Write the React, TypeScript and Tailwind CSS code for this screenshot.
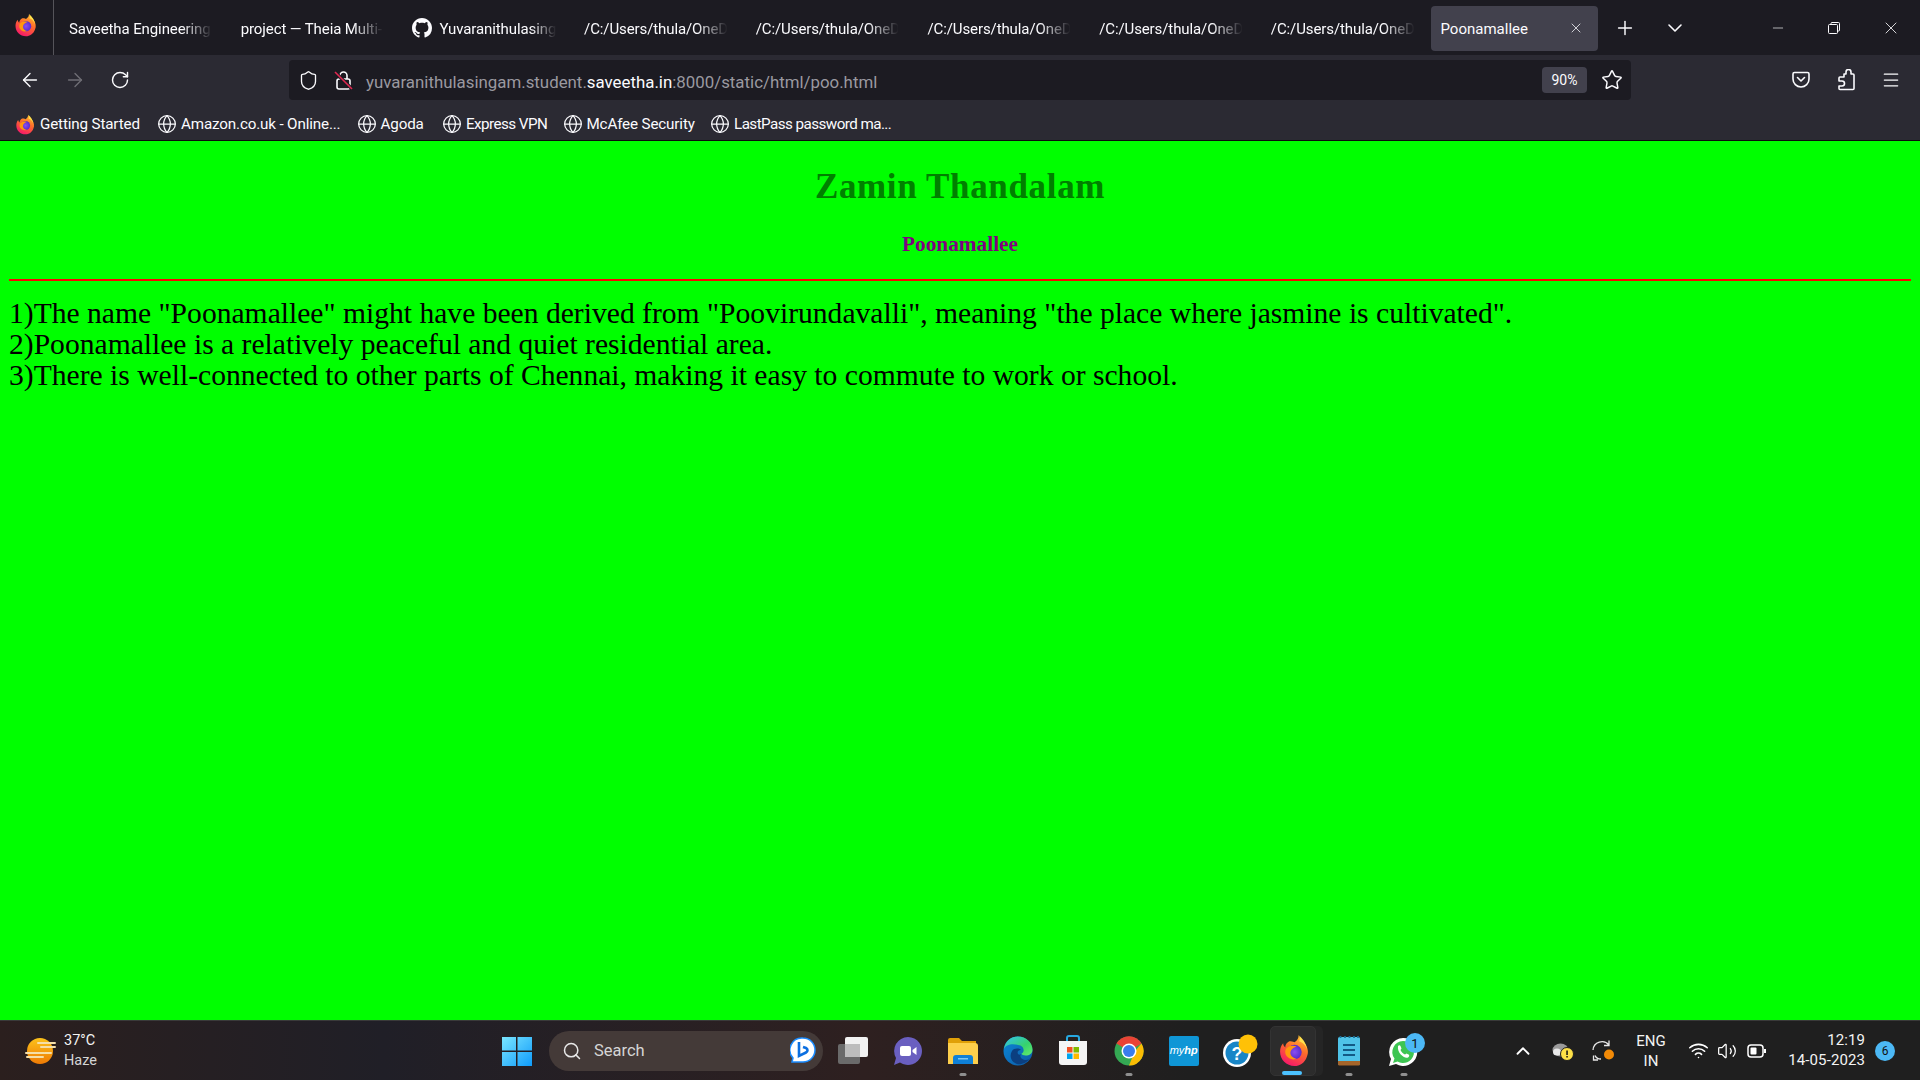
import React from "react";
import { ArrowLeft, ArrowRight, RotateCw, Shield, Star, Menu, Plus, ChevronDown, ChevronUp, X, Minus, Search, Wifi, Volume2, Globe } from "lucide-react";

const UI = "font-['Roboto','Open_Sans',sans-serif]";

function Firefox({ size = 22 }: { size?: number }) {
  return (
    <svg width={size} height={size} viewBox="0 0 32 32">
      <defs>
        <linearGradient id="ffa" x1="0.75" y1="0" x2="0.3" y2="1">
          <stop offset="0" stopColor="#ffc42e" />
          <stop offset="0.45" stopColor="#ff6a2b" />
          <stop offset="1" stopColor="#f5156c" />
        </linearGradient>
        <radialGradient id="ffb" cx="0.5" cy="0.5" r="0.5">
          <stop offset="0" stopColor="#8a4ff0" />
          <stop offset="1" stopColor="#592acb" />
        </radialGradient>
      </defs>
      <path d="M20 1c1 3 4 5 6 8 3 4 4 9 2 13-2 6-7 9-12 9C8 31 2 25 2 17c0-3 1-6 3-8 0 2 1 3 2 4 0-3 2-5 4-6 2 0 3 0 5 1 3-2 4-4 4-7z" fill="url(#ffa)" />
      <path d="M20.500 1.500c3 3 7 7 7.500 13.500-1-4-4-7-7.500-8 1-2 .8-3.500 0-5.500z" fill="#ffe14d" />
      <circle cx="16" cy="17.500" r="7" fill="url(#ffb)" />
      <path d="M8 14c3-3 7-3 10-2-3 1-6 3-6 6.500 0 3 3 5 6 5.500-4 2-11-1-11-6.500 0-1.500.4-2.500 1-3.500z" fill="#ff980e" />
    </svg>
  );
}

function GitHubMark() {
  return (
    <svg width="20" height="20" viewBox="0 0 16 16" fill="#fbfbfe">
      <path d="M8 0C3.58 0 0 3.58 0 8c0 3.54 2.29 6.53 5.47 7.59.4.07.55-.17.55-.38 0-.19-.01-.82-.01-1.49-2.01.37-2.53-.49-2.69-.94-.09-.23-.48-.94-.82-1.13-.28-.15-.68-.52-.01-.53.63-.01 1.08.58 1.23.82.72 1.21 1.87.87 2.33.66.07-.52.28-.87.51-1.07-1.78-.2-3.64-.89-3.64-3.95 0-.87.31-1.59.82-2.15-.08-.2-.36-1.02.08-2.12 0 0 .67-.21 2.2.82.64-.18 1.32-.27 2-.27s1.36.09 2 .27c1.53-1.04 2.2-.82 2.2-.82.44 1.1.16 1.92.08 2.12.51.56.82 1.27.82 2.15 0 3.07-1.87 3.75-3.65 3.95.29.25.54.73.54 1.48 0 1.07-.01 1.93-.01 2.2 0 .21.15.46.55.38A8.01 8.01 0 0 0 16 8c0-4.42-3.58-8-8-8z" />
    </svg>
  );
}

function Tab({ label, icon }: { label: string; icon?: React.ReactNode }) {
  return (
    <div className="w-[171.7px] h-[45px] flex items-center px-3 gap-[7px] shrink-0">
      {icon}
      <span className="whitespace-nowrap overflow-hidden flex-1 text-[15px] leading-[20px] pt-[2px] text-[#fbfbfe] tracking-[-0.1px] [mask-image:linear-gradient(90deg,#000_76%,transparent_97%)]">{label}</span>
    </div>
  );
}

function Bookmark({ label, ff, w, tight }: { label: string; ff?: boolean; w: string; tight?: boolean }) {
  return (
    <div className={"flex items-center gap-[4px] shrink-0 " + w}>
      {ff ? <Firefox size={21} /> : <Globe size={20} strokeWidth={1.5} className="text-[#fbfbfe]" />}
      <span className={"whitespace-nowrap text-[15.2px] text-[#fbfbfe] " + (tight ? "tracking-[-0.55px]" : "tracking-[-0.15px]")}>{label}</span>
    </div>
  );
}

function Slot({ children, dot, active }: { children: React.ReactNode; dot?: boolean; active?: boolean }) {
  return (
    <div className="relative w-[55.2px] h-[60px] flex items-center justify-center shrink-0">
      {active && <div className="absolute left-[10px] right-[-1px] top-[5px] bottom-[5px] rounded-[5px] bg-[#252525]" />}
      {active && <div className="absolute left-[3px] right-[6px] top-[5px] bottom-[5px] rounded-[5px] bg-[#2c2c2c] border border-[#333]" />}
      <div className="relative flex items-center justify-center">{children}</div>
      {dot && <div className="absolute bottom-[5px] left-1/2 -translate-x-1/2 w-[7px] h-[3px] rounded-full bg-[#8f8f8f]" />}
      {active && <div className="absolute bottom-[6px] left-[15px] w-[20px] h-[4px] rounded-full bg-[#4cc2ff]" />}
    </div>
  );
}

export default function App() {
  return (
    <div className={"w-[1920px] h-[1080px] flex flex-col overflow-hidden bg-[#00ff00] " + UI}>
      {/* Tab strip */}
      <div className="h-[55px] bg-[#1c1b22] flex items-center shrink-0">
        <div className="w-[54px] h-[55px] flex items-center justify-center border-r border-[#55545a] pb-[6px] pr-[2px]">
          <Firefox size={24} />
        </div>
        <div className="w-[3px]" />
        <div className="flex items-center">
          <Tab label="Saveetha Engineering College" />
          <Tab label="project — Theia Multi-Language" />
          <Tab label="Yuvaranithulasingam" icon={<GitHubMark />} />
          <Tab label="/C:/Users/thula/OneDrive" />
          <Tab label="/C:/Users/thula/OneDrive" />
          <Tab label="/C:/Users/thula/OneDrive" />
          <Tab label="/C:/Users/thula/OneDrive" />
          <Tab label="/C:/Users/thula/OneDrive" />
        </div>
        <div className="w-[167px] h-[45px] mb-[-1px] rounded-[4px] bg-[#42414d] flex items-center justify-between pl-[10px] pr-[14px] shrink-0 text-[15px] text-[#fbfbfe]">
          <span className="pt-[2px]">Poonamallee</span>
          <X size={16} strokeWidth={1.5} className="text-[#d0d0d6]" />
        </div>
        <div className="w-[54px] flex justify-center"><Plus size={22} strokeWidth={1.6} className="text-[#fbfbfe]" /></div>
        <div className="w-[46px] flex justify-center"><ChevronDown size={24} strokeWidth={1.6} className="text-[#fbfbfe]" /></div>
        <div className="flex-1" />
        <div className="w-[56px] flex justify-center"><Minus size={16} strokeWidth={1} className="text-[#fbfbfe]" /></div>
        <div className="w-[56px] flex justify-center">
          <svg width="12" height="12" viewBox="0 0 12 12" fill="none" stroke="#fbfbfe" strokeWidth="1"><rect x="0.5" y="2.5" width="9" height="9" rx="1" /><path d="M3 2.5V1.5a1 1 0 0 1 1-1h6.5a1 1 0 0 1 1 1V8a1 1 0 0 1-1 1h-1" /></svg>
        </div>
        <div className="w-[58px] flex justify-center"><X size={20} strokeWidth={1} className="text-[#fbfbfe]" /></div>
      </div>

      {/* Nav bar */}
      <div className="h-[50px] bg-[#2b2a33] flex items-start pt-[5px] shrink-0">
        <div className="w-[45px] h-[40px] flex items-center justify-center ml-[7px]"><ArrowLeft size={22} strokeWidth={1.5} className="text-[#fbfbfe]" /></div>
        <div className="w-[45px] h-[40px] flex items-center justify-center"><ArrowRight size={22} strokeWidth={1.5} className="text-[#6f6e75]" /></div>
        <div className="w-[45px] h-[40px] flex items-center justify-center"><RotateCw size={20} strokeWidth={1.7} className="text-[#fbfbfe]" /></div>
        <div className="w-[1342px] h-[40px] ml-[147px] rounded-[4px] bg-[#1c1b22] flex items-center pl-[9px] shrink-0">
          <Shield size={21} strokeWidth={1.5} className="text-[#fbfbfe] shrink-0" />
          <div className="w-[20px] h-[22px] ml-[15px] shrink-0">
            <svg width="20" height="22" viewBox="0 0 20 22" fill="none">
              <rect x="3" y="10" width="13" height="10" rx="2" stroke="#fbfbfe" strokeWidth="1.6" />
              <path d="M6 10V6.5a3.5 3.5 0 0 1 7 0V10" stroke="#fbfbfe" strokeWidth="1.6" />
              <path d="M1 3l17 17" stroke="#1c1b22" strokeWidth="3.4" />
              <path d="M1 3l17 17" stroke="#e22850" strokeWidth="1.6" />
            </svg>
          </div>
          <span className="ml-[12px] pt-[5px] text-[16.85px] text-[#9a99a0] whitespace-nowrap">
            yuvaranithulasingam.student.<span className="text-[#fbfbfe]">saveetha.in</span>:8000/static/html/poo.html
          </span>
          <div className="flex-1" />
          <div className="w-[45px] h-[26px] rounded-[4px] bg-[#42414d] flex items-center justify-center text-[14px] text-[#fbfbfe]">90%</div>
          <div className="w-[38px] ml-[6px] flex justify-center"><Star size={22} strokeWidth={1.6} className="text-[#fbfbfe]" /></div>
        </div>
        <div className="flex-1" />
        <div className="w-[45px] h-[40px] flex items-center justify-center">
          <svg width="20" height="20" viewBox="0 0 20 20" fill="none" stroke="#fbfbfe" strokeWidth="1.6" strokeLinecap="round" strokeLinejoin="round"><path d="M3.5 2.5h13a1.5 1.5 0 0 1 1.5 1.5v5a8 8 0 0 1-16 0V4a1.5 1.5 0 0 1 1.5-1.5z" /><path d="M6.5 7.5L10 11l3.5-3.5" /></svg>
        </div>
        <div className="w-[45px] h-[40px] flex items-center justify-center">
          <svg width="20" height="22" viewBox="0 0 20 22" fill="none" stroke="#fbfbfe" strokeWidth="1.6" strokeLinejoin="round"><path d="M8 5h2V3a2.500 2.500 0 0 1 5 0v2h2a1 1 0 0 1 1 1v13.500a1 1 0 0 1-1 1H4a1 1 0 0 1-1-1V17h3a2.500 2.500 0 0 0 0-5H3V9a1 1 0 0 1 1-1h4z" /></svg>
        </div>
        <div className="w-[45px] h-[40px] flex items-center justify-center mr-[7px]"><Menu size={20} strokeWidth={1.5} className="text-[#fbfbfe]" /></div>
      </div>

      {/* Bookmarks */}
      <div className="h-[36px] bg-[#2b2a33] border-b border-[#0c0c0d] flex items-center pl-[15px] pt-[4px] shrink-0">
        <Bookmark ff label="Getting Started" w="w-[142px]" />
        <Bookmark label="Amazon.co.uk - Online..." w="w-[199.5px]" />
        <Bookmark label="Agoda" w="w-[85.5px]" />
        <Bookmark tight label="Express VPN" w="w-[120.5px]" />
        <Bookmark label="McAfee Security" w="w-[147.5px]" />
        <Bookmark tight label="LastPass password ma..." w="w-[190px]" />
      </div>

      {/* Page */}
      <main className="flex-1 bg-[#00ff00] px-[9px] font-['Liberation_Serif',serif] min-h-0">
        <h1 className="text-center font-bold text-[35px] leading-[38px] text-[#008000] tracking-[0.65px] pt-[27px] box-content">Zamin Thandalam</h1>
        <h2 className="text-center font-bold text-[21.3px] leading-[24px] text-[#800080] mt-[26px]">Poonamallee</h2>
        <hr className="border-0 h-[2px] bg-[#ff0000] mt-[23px]" />
        <div className="text-[29.6px] leading-[31px] text-black mt-[17px]">
          <p>1)The name "Poonamallee" might have been derived from "Poovirundavalli", meaning "the place where jasmine is cultivated".</p>
          <p>2)Poonamallee is a relatively peaceful and quiet residential area.</p>
          <p>3)There is well-connected to other parts of Chennai, making it easy to commute to work or school.</p>
        </div>
      </main>

      {/* Taskbar */}
      <footer className="h-[60px] border-t border-[#3a3a3a] bg-[linear-gradient(90deg,#2b1f1e_0%,#201f27_20%,#2e2020_45%,#1f1f1f_62%,#1f1f1f_100%)] flex items-center shrink-0 text-[#f3f3f3]">
        <div className="w-[485px] flex items-center pl-[24px] shrink-0">
          <svg width="32" height="30" viewBox="0 0 32 30">
            <defs><linearGradient id="sun" x1="0" y1="0" x2="0" y2="1"><stop offset="0" stopColor="#fcc21b" /><stop offset="1" stopColor="#ee7a05" /></linearGradient></defs>
            <circle cx="16" cy="15" r="13" fill="url(#sun)" />
            <path d="M14 7h17M17 11h14M2 17h18M3 21h16M21 17h6" stroke="#f5dfa8" strokeWidth="2" strokeLinecap="round" />
          </svg>
          <div className="ml-[8px] flex flex-col text-[14.5px] leading-[20px]">
            <span>37°C</span>
            <span className="text-[#d5d5d5]">Haze</span>
          </div>
        </div>
        <div className="w-[64px] flex justify-center shrink-0">
          <svg width="30" height="30" viewBox="0 0 30 30">
            <defs><linearGradient id="win" x1="0" y1="0" x2="1" y2="1"><stop offset="0" stopColor="#7ae5ff" /><stop offset="1" stopColor="#0f9bfa" /></linearGradient></defs>
            <path d="M0 1h14v13.5H0zM15.5 1H30v13.5H15.5zM0 16h14v14H0zM15.5 16H30v14H15.5z" fill="url(#win)" />
          </svg>
        </div>
        <div className="w-[274px] h-[40px] rounded-full bg-[#443a38] flex items-center pl-[13px] pr-[7px] shrink-0">
          <Search size={20} strokeWidth={1.8} className="text-[#e8e8e8]" />
          <span className="ml-[12px] pt-[2px] text-[16.5px] text-[#d5d5d5]">Search</span>
          <div className="flex-1" />
          <svg width="26" height="28" viewBox="0 0 26 28">
            <path d="M13 1a12 12 0 0 1 0 24H2l1-4A12 12 0 0 1 13 1z" fill="#fff" stroke="#1a8cff" strokeWidth="1.5" />
            <path d="M9 5v14l7-3.5c2-1 2-3.500 0-4.500l-3-1" fill="none" stroke="#0c6fe0" strokeWidth="2.6" />
          </svg>
        </div>
        <div className="w-[2px] shrink-0" />

        <Slot>
          <svg width="32" height="30" viewBox="0 0 32 30"><rect x="1" y="8" width="22" height="20" rx="2" fill="#6a6a6a" /><rect x="8" y="1" width="23" height="20" rx="2" fill="#f2f2f2" /><path d="M8 8h15v13H8z" fill="#bdbdbd" /></svg>
        </Slot>
        <Slot>
          <svg width="30" height="30" viewBox="0 0 30 30"><path d="M15 1a14 14 0 1 1-8 25.500L1 29l2-7A14 14 0 0 1 15 1z" fill="#6a5fc0" /><rect x="7" y="10" width="11" height="10" rx="2" fill="#fff" /><path d="M19.500 14l4-3v8l-4-3z" fill="#fff" /></svg>
        </Slot>
        <Slot dot>
          <svg width="32" height="28" viewBox="0 0 32 28"><path d="M1 3a2 2 0 0 1 2-2h9l3 3h14v4H1z" fill="#e0a008" /><path d="M1 6h27a3 3 0 0 1 3 3v18H1z" fill="#fdcf4c" /><path d="M6 21a3 3 0 0 1 3-3h14a3 3 0 0 1 3 3v6H6z" fill="#0f80d7" /><rect x="11" y="21" width="10" height="1.500" fill="#7cc7f5" /></svg>
        </Slot>
        <Slot>
          <svg width="30" height="30" viewBox="0 0 30 30">
            <defs><linearGradient id="eg" x1="0" y1="0" x2="1" y2="1"><stop offset="0" stopColor="#35c1f1" /><stop offset="0.6" stopColor="#36d26c" /><stop offset="1" stopColor="#66eb6e" /></linearGradient><linearGradient id="eb" x1="0" y1="0" x2="1" y2="1"><stop offset="0" stopColor="#0c88d8" /><stop offset="1" stopColor="#0c59a4" /></linearGradient></defs>
            <circle cx="15" cy="15" r="14.500" fill="url(#eb)" />
            <path d="M1 13C2 5 8 .5 15 .5c8 0 14.500 6 14.500 13 0 4-3 6-7 6-2 0-4-1-4-2 3-1 3-6-1-8C10 7 3 8 1 13z" fill="url(#eg)" />
            <path d="M18 18c-2 3 1 6 5 6 2 0 3-1 4-2-3 5-9 7-13 6-6-2-8-8-5-13 2-3 7-3 9-1-3 0-4 2-3 4 1 1 2 1 3 0z" fill="#0b3f80" />
          </svg>
        </Slot>
        <Slot>
          <svg width="30" height="31" viewBox="0 0 30 31"><path d="M9 6V3a2 2 0 0 1 2-2h8a2 2 0 0 1 2 2v3" fill="none" stroke="#27a8e0" strokeWidth="2" /><path d="M1 6h28v21a3 3 0 0 1-3 3H4a3 3 0 0 1-3-3z" fill="#f5f5f5" /><rect x="9" y="12" width="5.500" height="5.500" fill="#f25022" /><rect x="15.500" y="12" width="5.500" height="5.500" fill="#7fba00" /><rect x="9" y="18.500" width="5.500" height="5.500" fill="#00a4ef" /><rect x="15.500" y="18.500" width="5.500" height="5.500" fill="#ffb900" /></svg>
        </Slot>
        <Slot dot>
          <svg width="30" height="30" viewBox="0 0 30 30">
            <circle cx="15" cy="15" r="14.500" fill="#34a853" />
            <path d="M2.500 7.500A14.500 14.500 0 0 1 27.500 7.500L15 15z" fill="#ea4335" />
            <path d="M27.500 7.500A14.500 14.500 0 0 1 15 29.500L21 15z" fill="#fbbc04" />
            <circle cx="15" cy="15" r="7.500" fill="#fff" /><circle cx="15" cy="15" r="6" fill="#3b7ded" />
          </svg>
        </Slot>
        <Slot>
          <div className="w-[30px] h-[30px] rounded-[2px] bg-[#0f96d6] flex items-center justify-center text-[11px] text-white italic font-['Liberation_Sans',sans-serif]">my<b>hp</b></div>
        </Slot>
        <Slot>
          <svg width="36" height="34" viewBox="0 0 36 34" className="ml-[2px]">
            <circle cx="15" cy="19" r="14" fill="#fff" /><circle cx="15" cy="19" r="11.500" fill="#1886c7" />
            <text x="15" y="25.500" textAnchor="middle" fontSize="18" fontWeight="bold" fill="#fff" fontFamily="Liberation Sans">?</text>
            <circle cx="26" cy="10" r="9.500" fill="#ffc107" />
          </svg>
        </Slot>
        <Slot active>
          <Firefox size={33} />
        </Slot>
        <Slot dot>
          <svg width="24" height="31" viewBox="0 0 24 31"><rect x="1" y="2" width="22" height="28" rx="1.500" fill="#4fc3e8" /><path d="M1 26h22v3a1.500 1.500 0 0 1-1.500 1.500h-19A1.500 1.500 0 0 1 1 29z" fill="#a5652a" /><path d="M3.500 3v-2M8 3v-2M12.500 3v-2M17 3v-2M21 3v-2" stroke="#1d6f95" strokeWidth="1.800" /><path d="M6 10h12M6 15h12M6 20h12" stroke="#135a85" strokeWidth="2" /></svg>
        </Slot>
        <Slot dot>
          <svg width="38" height="36" viewBox="0 0 38 36" className="ml-[3px]">
            <path d="M16 5a14 14 0 1 1-7 26l-7 2 2-7A14 14 0 0 1 16 5z" fill="#fff" />
            <path d="M16 8a11 11 0 1 1-5.500 20.500L6 30l1.500-4.500A11 11 0 0 1 16 8z" fill="#3dc552" />
            <path d="M11 13c1-1 2-1 2.500 0l1 2.500-1 1.500c1 2 2.500 3.500 4.500 4.500l1.500-1 2.500 1.200c.5 1 0 2-1 2.800-4 1.500-11-5-10-11z" fill="#fff" />
            <circle cx="28" cy="10" r="10" fill="#4cb8f5" />
            <text x="28" y="14.500" textAnchor="middle" fontSize="13" fill="#111" fontFamily="Roboto">1</text>
          </svg>
        </Slot>

        <div className="flex-1" />
        <div className="w-[40px] flex justify-center shrink-0"><ChevronUp size={22} strokeWidth={2} className="text-white" /></div>
        <div className="w-[40px] flex justify-center shrink-0">
          <svg width="22" height="20" viewBox="0 0 22 20"><ellipse cx="8.500" cy="9" rx="8" ry="6.500" fill="#9a9a9a" /><ellipse cx="5" cy="11" rx="4" ry="3.500" fill="#e8e8e8" /><circle cx="15" cy="13" r="6.500" fill="#fde047" stroke="#1f1f1f" strokeWidth="1" /><rect x="14.300" y="9.500" width="1.500" height="4.500" fill="#111" /><rect x="14.300" y="15" width="1.500" height="1.500" fill="#111" /></svg>
        </div>
        <div className="w-[40px] flex justify-center shrink-0">
          <svg width="24" height="24" viewBox="0 0 24 24" fill="none"><path d="M2 11a9 9 0 0 1 16-5M18 1.500V6.500h-5M10 20c-3 0-5-1-6-3.500M7 21H2.500v-4.500" stroke="#e8e8e8" strokeWidth="1.300" /><circle cx="18" cy="15.500" r="5" fill="#f28a07" /></svg>
        </div>
        <div className="w-[56px] flex flex-col items-center text-[15px] leading-[20px] shrink-0">
          <span>ENG</span><span>IN</span>
        </div>
        <div className="w-[38px] flex justify-center shrink-0"><Wifi size={21} strokeWidth={1.8} className="text-white" /></div>
        <div className="w-[20px] flex justify-center shrink-0"><Volume2 size={20} strokeWidth={1.5} className="text-white" /></div>
        <div className="w-[40px] flex justify-center shrink-0">
          <svg width="20" height="14" viewBox="0 0 20 14" fill="none"><rect x="1" y="1" width="15" height="12" rx="3" stroke="#fff" strokeWidth="1.500" /><rect x="3.500" y="3.500" width="6" height="7" rx="1" fill="#fff" /><path d="M18 5v4" stroke="#fff" strokeWidth="2" /></svg>
        </div>
        <div className="w-[88px] flex flex-col items-end text-[15px] leading-[20px] tracking-[0.1px] pb-[2px] shrink-0">
          <span>12:19</span><span>14-05-2023</span>
        </div>
        <div className="w-[20px] h-[20px] ml-[10px] mr-[25px] rounded-full bg-[#4cb8f5] flex items-center justify-center text-[12px] text-[#111] shrink-0">6</div>
      </footer>
    </div>
  );
}
